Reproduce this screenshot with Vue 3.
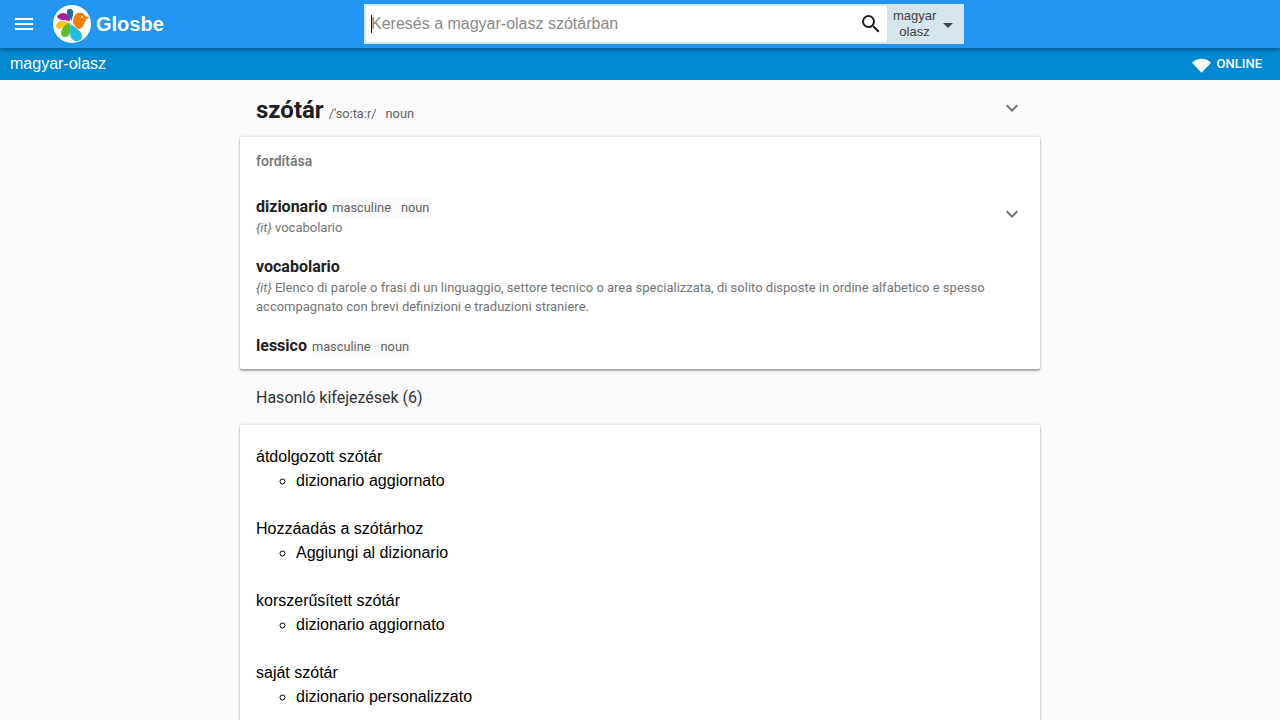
<script setup>
const translations = [
  { word: 'dizionario', tags: ['masculine', 'noun'], desc: 'vocabolario', chevron: true },
  { word: 'vocabolario', tags: [], desc: 'Elenco di parole o frasi di un linguaggio, settore tecnico o area specializzata, di solito disposte in ordine alfabetico e spesso accompagnato con brevi definizioni e traduzioni straniere.' },
  { word: 'lessico', tags: ['masculine', 'noun'] },
]
const similar = [
  ['átdolgozott szótár', 'dizionario aggiornato'],
  ['Hozzáadás a szótárhoz', 'Aggiungi al dizionario'],
  ['korszerűsített szótár', 'dizionario aggiornato'],
  ['saját szótár', 'dizionario personalizzato'],
]
</script>

<template>
  <div class="page">
    <header class="topbar">
      <div class="brand">
        <button class="menu" aria-label="menu">
          <svg width="24" height="24" viewBox="0 0 24 24"><path fill="#fff" d="M3 18h18v-2H3v2zm0-5h18v-2H3v2zm0-7v2h18V6H3z"/></svg>
        </button>
        <svg class="logo" width="38" height="38" viewBox="0 0 38 38">
          <circle cx="19" cy="19" r="19" fill="#fff"/>
          <path fill="#a51d9a" d="M4 12c2-5 8-5 11-2 2 2 2 4 2 6-4-1-10 0-13-4z"/>
          <path fill="#1c6f9e" d="M14 6c1-3 5-3 6 0 1 3-1 5-1 10-2-3-6-6-5-10z"/>
          <path fill="#fbc31c" d="M3 21c0-3 3-5 7-5 3 0 5 1 7 2-3 1-6 5-10 6-2 0-4-1-4-3z"/>
          <path fill="#64bb2c" d="M8 28c0-4 4-9 9-10 1 4 1 9-1 12-2 3-8 3-8-2z"/>
          <path fill="#26bde2" d="M18 19c4 3 10 7 11 11 1 4-3 7-7 6-3-1-5-4-5-7 0-3 0-7 1-10z"/>
          <path fill="#f57c0c" d="M20 18c0-4 1-9 5-10 3-1 6 0 7 3l5 2-4 1c-1 3-3 10-7 10-2 0-4-3-6-6z"/>
          <circle cx="29" cy="12" r="0.900" fill="#fff"/>
        </svg>
        <span class="brand-name">Glosbe</span>
      </div>
      <div class="search">
        <div class="search-input">
          <span class="caret"></span>
          <span class="placeholder">Keresés a magyar-olasz szótárban</span>
        </div>
        <svg class="search-icon" width="24" height="24" viewBox="0 0 24 24"><path fill="#212121" d="M15.500 14h-.79l-.28-.27A6.471 6.471 0 0 0 16 9.500 6.500 6.500 0 1 0 9.500 16c1.610 0 3.090-.59 4.230-1.570l.27.28v.79l5 4.990L20.490 19l-4.990-5zm-6 0C7.010 14 5 11.990 5 9.500S7.010 5 9.500 5 14 7.010 14 9.500 11.990 14 9.500 14z"/></svg>
        <div class="lang">
          <span class="lang-text">magyar<br>olasz</span>
          <span class="arrow"></span>
        </div>
      </div>
    </header>
    <div class="subbar">
      <span class="pair">magyar-olasz</span>
      <span class="status">
        <svg class="wifi" width="19" height="19" viewBox="0 0 24 24"><path fill="#fff" d="M12 21 0 8.500C3 5.500 7.300 3.500 12 3.500s9 2 12 5L12 21z"/></svg>
        ONLINE
      </span>
    </div>
    <main class="content">
      <div class="head">
        <div class="head-main">
          <h1>szótár</h1>
          <span class="ipa">/'so:ta:r/</span>
          <span class="pos">noun</span>
        </div>
        <svg class="chev" width="24" height="24" viewBox="0 0 24 24"><path fill="#757575" d="M16.590 8.590 12 13.170 7.410 8.590 6 10l6 6 6-6z"/></svg>
      </div>
      <section class="card trans">
        <h2>fordítása</h2>
        <div v-for="t in translations" :key="t.word" class="item">
          <div class="item-body">
            <div class="item-title">
              <strong>{{ t.word }}</strong>
              <span v-if="t.tags.length" class="tags"><span v-for="g in t.tags" :key="g">{{ g }}</span></span>
            </div>
            <p v-if="t.desc" class="desc"><i>{it}</i> {{ t.desc }}</p>
          </div>
          <svg v-if="t.chevron" class="chev item-chev" width="24" height="24" viewBox="0 0 24 24"><path fill="#757575" d="M16.590 8.590 12 13.170 7.410 8.590 6 10l6 6 6-6z"/></svg>
        </div>
      </section>
      <h3 class="similar-title">Hasonló kifejezések (6)</h3>
      <section class="card similar">
        <dl v-for="s in similar" :key="s[0]">
          <dt>{{ s[0] }}</dt>
          <dd><ul><li>{{ s[1] }}</li></ul></dd>
        </dl>
      </section>
    </main>
  </div>
</template>

<style>
html, body { margin: 0; background: #fafafa; overflow: hidden; }
</style>

<style scoped>
.page { height: 720px; overflow: hidden; font-family: Roboto, sans-serif; background: #fafafa; color: #212121; }
.topbar { position: relative; z-index: 2; height: 48px; background: #2196f3; box-shadow: 0 1px 5px rgba(0,0,0,.45); display: flex; align-items: center; }
.brand { width: 364px; display: flex; align-items: center; flex: none; }
.menu { border: 0; background: none; padding: 0; margin-left: 12px; width: 24px; height: 24px; }
.logo { margin-left: 17px; flex: none; }
.brand-name { margin-left: 5px; color: #fff; font: 700 20px "Liberation Sans", Arial, sans-serif; }
.search { width: 600px; height: 40px; box-sizing: border-box; border: 2px solid #d6e4ec; background: #fff; display: flex; align-items: center; }
.search-input { flex: 1; display: flex; align-items: center; padding-left: 5px; }
.caret { width: 1px; height: 18px; background: #212121; margin-right: -1px; }
.placeholder { color: #8a8a8a; font: 16px "Liberation Sans", Arial, sans-serif; }
.search-icon { margin-right: 4px; }
.lang { width: 75px; height: 36px; background: #d6e4ec; display: flex; align-items: center; box-sizing: border-box; padding-left: 6px; }
.lang-text { width: 43px; padding-bottom: 1px; text-align: center; font: 13px/15.500px "Liberation Sans", Arial, sans-serif; color: #424242; }
.arrow { margin-left: 7px; margin-top: 2px; border: 5px solid transparent; border-top-color: #424242; border-bottom: 0; }
.subbar { height: 32px; background: #0288d1; color: #fff; display: flex; align-items: center; justify-content: space-between; padding: 0 18px 0 10px; }
.pair { font: 16px "Liberation Sans", Arial, sans-serif; padding-bottom: 1px; }
.status { display: flex; align-items: center; gap: 6px; padding-bottom: 1px; font-size: 13px; font-weight: 500; }
.wifi { margin-top: 3px; }
.content { width: 800px; margin: 0 auto; }
.head { display: flex; justify-content: space-between; height: 57px; box-sizing: border-box; padding: 16px 16px 0; }
.head-main { display: flex; align-items: baseline; }
h1 { margin: 0; font-size: 24px; line-height: 28px; font-weight: 700; }
.ipa { margin-left: 5px; font-size: 12.800px; color: #616161; }
.pos { margin-left: 9px; font-size: 12.800px; color: #616161; }
.card { background: #fff; box-shadow: 0 2px 2px rgba(0,0,0,.3), 0 0 3px rgba(0,0,0,.2); border-radius: 2px; }
.trans { height: 232px; box-sizing: border-box; padding: 16px; }
h2 { margin: 0 0 28px; font-size: 14px; line-height: 16px; font-weight: 500; color: #757575; }
.item { display: flex; justify-content: space-between; margin-bottom: 20px; }
.item-body { flex: 1; }
.item-title { display: flex; align-items: baseline; gap: 5px; line-height: 20px; min-height: 21px; }
strong { font-size: 16px; font-weight: 700; }
.tags { display: inline-flex; gap: 10px; background: #fafafa; font-size: 12.800px; color: #616161; padding: 0 2px 0 0; }
.desc { margin: 0; font-size: 13px; line-height: 19px; color: #757575; }
.item-chev { margin-top: 5px; }
.similar-title { margin: 0; height: 56px; box-sizing: border-box; padding: 19px 16px 0; font-size: 16px; line-height: 19px; font-weight: 400; color: #333; }
.similar { padding: 20px 16px; height: 400px; box-sizing: border-box; color: #000; font-family: "Liberation Sans", Arial, sans-serif; font-size: 16px; line-height: 24px; }
dl { margin: 0 0 24px; }
dd { margin: 0; }
ul { margin: 0; padding-left: 40px; list-style: circle; }
</style>
